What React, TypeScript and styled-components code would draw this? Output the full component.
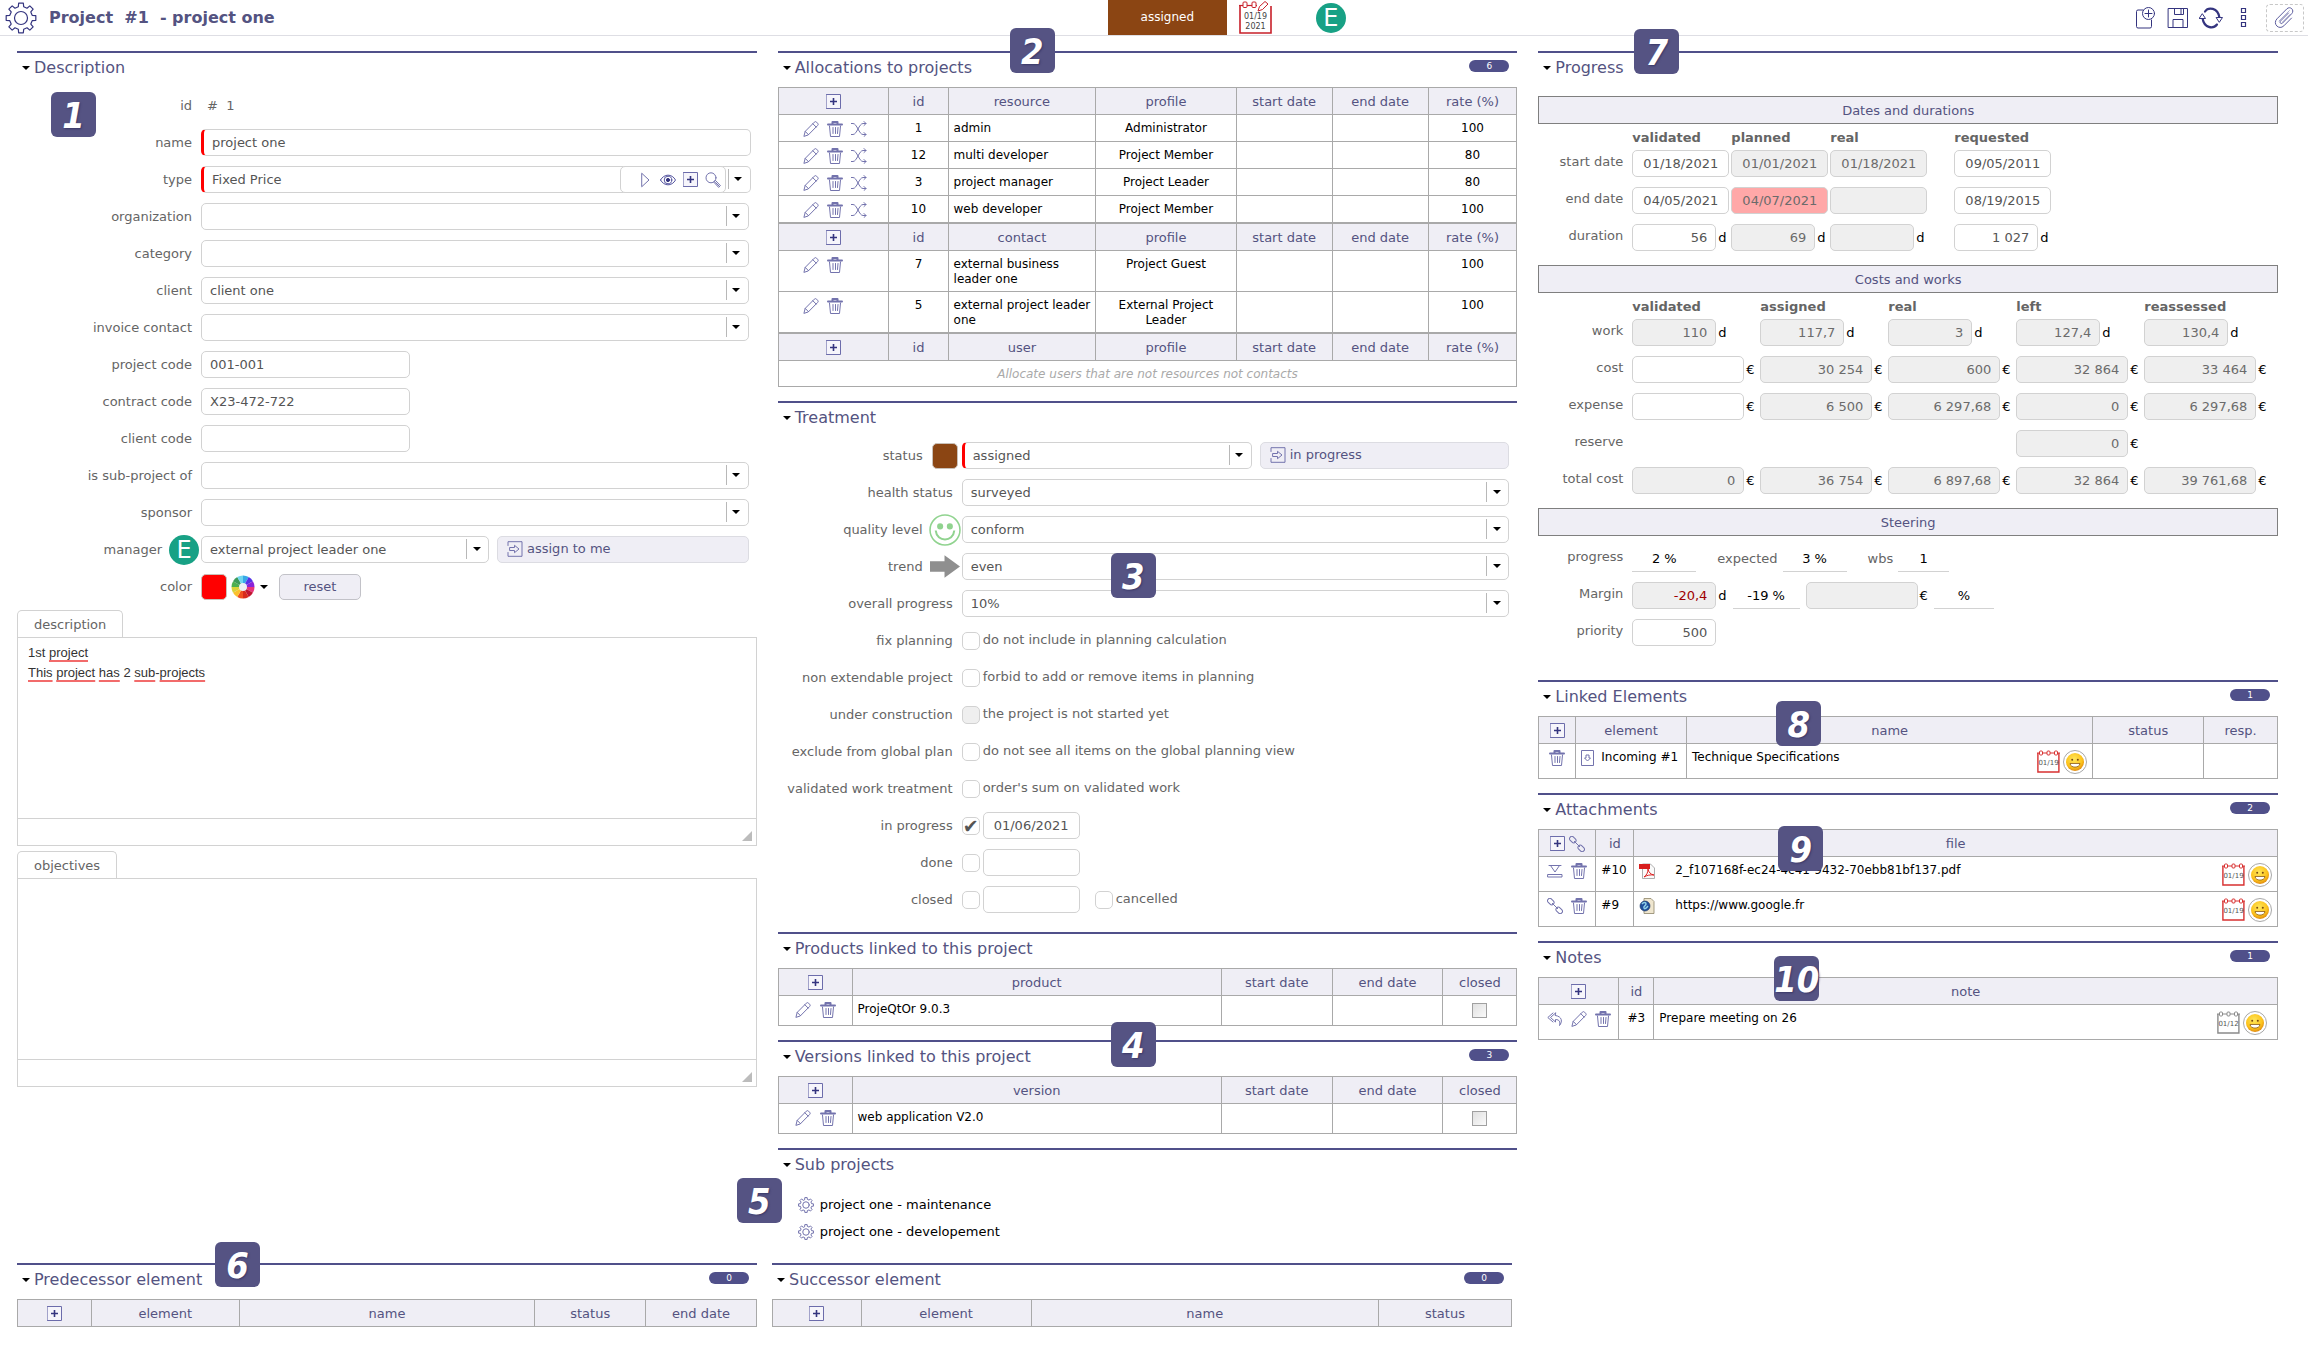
import React from "react";
import styled, { createGlobalStyle, css } from "styled-components";

const c = {
  brand: "#50508a",
  brandText: "#545381",
  icon: "#7373ad",
  iconDark: "#34347f",
  head: "#efeef5",
  grid: "#a9a9a9",
  field: "#d2d2d2",
  label: "#656565",
  value: "#555555",
  readonly: "#efefef",
};

const Global = createGlobalStyle`
  *, *::before, *::after { box-sizing: border-box; }
  body { margin: 0; background: #fff; font-family: "DejaVu Sans", Verdana, sans-serif; font-size: 13px; color: #000; }
  button, input, select, textarea { font: inherit; }
  a { color: inherit; text-decoration: none; }
`;

/* ---------- page ---------- */

const TopBar = styled.header`
  display: grid;
  grid-template-columns: 48% 1fr auto;
  align-items: center;
  height: 36px;
  border-bottom: 1px solid #dedee4;
`;
const TitleGroup = styled.div`
  display: flex;
  align-items: center;
  gap: 12px;
  padding-left: 5px;
`;
const Title = styled.h1`
  margin: 0;
  font-size: 16px;
  line-height: 20px;
  color: ${c.brandText};
  white-space: pre;
`;
const StatusGroup = styled.div`
  display: flex;
  align-items: center;
  height: 35px;
`;
const StatusTag = styled.div`
  width: 119px;
  height: 35px;
  margin-right: 12px;
  background: #8b4513;
  color: #fff;
  font-size: 12px;
  line-height: 35px;
  text-align: center;
`;
const Avatar = styled.span<{ $spaced?: boolean }>`
  flex: none;
  display: flex;
  align-items: center;
  justify-content: center;
  width: 30px;
  height: 30px;
  margin-left: ${(p) => (p.$spaced ? "44px" : "0")};
  border-radius: 50%;
  background: #18a185;
  color: #fff;
  font-size: 24px;
  line-height: 30px;
`;
const Tools = styled.div`
  display: flex;
  align-items: center;
  gap: 10px;
  padding-right: 4px;
`;
const IconButton = styled.button`
  flex: none;
  display: inline-flex;
  padding: 0;
  border: 0;
  background: none;
  cursor: pointer;
`;
const DropZone = styled.button`
  display: flex;
  align-items: center;
  justify-content: center;
  width: 38px;
  height: 28px;
  margin-left: 8px;
  padding: 0;
  border: 1px dashed #c8c8c8;
  border-radius: 4px;
  background: #fff;
`;
const Columns = styled.main`
  display: grid;
  grid-template-columns: repeat(3, minmax(0, 1fr));
  column-gap: 21px;
  align-items: start;
  padding: 15px 30px 0 17px;
`;
const Dependencies = styled.div`
  display: grid;
  grid-template-columns: repeat(3, minmax(0, 1fr));
  column-gap: 15px;
  padding: 18px 41px 20px 17px;
`;
const Column = styled.div`
  display: flex;
  flex-direction: column;
  gap: 14px;
`;

/* ---------- section ---------- */

const SectionBox = styled.section`
  position: relative;
  border-top: 2px solid ${c.brand};
`;
const SectionHead = styled.div`
  display: flex;
  align-items: center;
  height: 34px;
  padding: 0 8px 5px 5px;
`;
const Caret = styled.span`
  flex: none;
  border: 4px solid transparent;
  border-top-color: #000;
  border-bottom: 0;
`;
const SectionTitle = styled.h2`
  flex: 1;
  margin: 0 0 0 4px;
  font-size: 16px;
  font-weight: 400;
  line-height: 20px;
  color: ${c.brandText};
`;
const Count = styled.span`
  width: 40px;
  height: 12px;
  margin-bottom: 3px;
  border-radius: 6px;
  background: ${c.brand};
  color: #fff;
  font-size: 9px;
  line-height: 12px;
  text-align: center;
`;
const Marker = styled.span<{ $x: number; $y: number }>`
  position: absolute;
  z-index: 2;
  left: ${(p) => p.$x}px;
  top: ${(p) => p.$y}px;
  width: 45px;
  height: 45px;
  border-radius: 6px;
  background: #555383;
  color: #fff;
  font: italic bold 36px/47px "DejaVu Sans Condensed", "DejaVu Sans", sans-serif;
  text-align: center;
  white-space: nowrap;
  text-shadow: 1px 1px 2px #3a3868;
`;

function Section(p: {
  title: string;
  count?: number;
  mark?: [string, number, number];
  children: React.ReactNode;
}) {
  return (
    <SectionBox>
      <SectionHead>
        <Caret />
        <SectionTitle>{p.title}</SectionTitle>
        {p.count !== undefined && <Count>{p.count}</Count>}
      </SectionHead>
      {p.mark && (
        <Marker $x={p.mark[1]} $y={p.mark[2]}>
          {p.mark[0]}
        </Marker>
      )}
      {p.children}
    </SectionBox>
  );
}

/* ---------- form ---------- */

const Form = styled.div`
  display: flex;
  flex-direction: column;
  gap: 10px;
  padding: 5px 8px 5px 0;
`;
const Row = styled.div`
  display: grid;
  grid-template: 27px / 184px minmax(0, 1fr);
`;
const LabelCell = styled.div<{ $adorned?: boolean }>`
  display: flex;
  align-items: center;
  justify-content: flex-end;
  gap: 7px;
  min-height: 0;
  padding-right: ${(p) => (p.$adorned ? "2px" : "9px")};
`;
const Label = styled.label`
  color: ${c.label};
  line-height: 16px;
  white-space: nowrap;
`;
const Adornment = styled.span`
  flex: none;
  display: flex;
  align-items: center;
  justify-content: center;
  width: 30px;
  height: 27px;
`;
const Controls = styled.div`
  display: flex;
  align-items: center;
`;
const fieldBase = css`
  height: 27px;
  border: 1px solid ${c.field};
  border-radius: 5px;
  background: #fff;
  color: ${c.value};
  outline: none;
`;
const TextInput = styled.input<{ $w?: string; $required?: boolean }>`
  ${fieldBase}
  flex: none;
  width: ${(p) => p.$w ?? "100%"};
  padding: 0 8px;
  ${(p) => p.$required && "border-left: 3px solid #f00;"}
`;
const SelectBox = styled.span<{ $w?: string; $required?: boolean }>`
  ${fieldBase}
  position: relative;
  display: block;
  flex: none;
  width: ${(p) => p.$w ?? "100%"};
  ${(p) => p.$required && "border-left: 3px solid #f00;"}
`;
const NativeSelect = styled.select`
  appearance: none;
  display: block;
  width: 100%;
  height: 25px;
  padding: 0 24px 0 8px;
  border: 0;
  border-radius: 5px;
  background: none;
  color: ${c.value};
  outline: none;
`;
const Arrow = styled.span`
  position: absolute;
  top: 2px;
  right: 0;
  display: flex;
  align-items: center;
  justify-content: center;
  width: 22px;
  height: 20px;
  padding-right: 2px;
  border-left: 1px solid #b8b8b8;
  pointer-events: none;
`;
const FieldTools = styled.span`
  position: absolute;
  top: -1px;
  right: 24px;
  display: flex;
  align-items: center;
  justify-content: flex-end;
  gap: 7px;
  width: 106px;
  height: 27px;
  padding-right: 4px;
  border: 1px solid ${c.field};
  border-radius: 5px;
  background: #fff;
`;
const ActionButton = styled.button`
  display: flex;
  flex: 1;
  align-items: center;
  gap: 4px;
  height: 27px;
  margin-left: 8px;
  padding: 0 9px 2px;
  border: 1px solid #dcdce2;
  border-radius: 5px;
  background: ${c.head};
  color: ${c.brandText};
  text-align: left;
`;
const ResetButton = styled.button`
  width: 82px;
  height: 26px;
  margin-left: 11px;
  padding: 0;
  border: 1px solid #c2c2c8;
  border-radius: 5px;
  background: ${c.head};
  color: ${c.brandText};
`;
const Swatch = styled.span<{ $color: string }>`
  flex: none;
  width: 26px;
  height: 26px;
  border: 1px solid #c9c0b8;
  border-radius: 5px;
  background: ${(p) => p.$color};
`;
const ColorPicker = styled.button`
  display: flex;
  align-items: center;
  gap: 5px;
  margin-left: 4px;
  padding: 0;
  border: 0;
  background: none;
`;
const IdText = styled.output`
  padding-left: 6px;
  color: ${c.label};
  white-space: pre;
`;
const Check = styled.input`
  appearance: none;
  flex: none;
  display: flex;
  align-items: center;
  justify-content: center;
  width: 18px;
  height: 18px;
  margin: 0 3px 0 0;
  border: 1px solid ${c.field};
  border-radius: 5px;
  background: #fff;
  &:disabled { background: ${c.readonly}; }
  &:checked::before { content: "✔"; color: #555; font-size: 19px; line-height: 16px; }
`;
const CheckText = styled.label`
  padding-bottom: 2px;
  color: ${c.label};
  line-height: 16px;
`;
const DateInput = styled.input<{ $tone?: "ro" | "late" }>`
  ${fieldBase}
  width: 97px;
  padding: 0;
  text-align: center;
  background: ${(p) => (p.$tone === "ro" ? c.readonly : p.$tone === "late" ? "#ffa8a8" : "#fff")};
  ${(p) => p.$tone && "color: #6b6b6b;"}
`;
const Gap = styled.span`
  width: 15px;
`;

function Field(p: { label: string; id: string; icon?: React.ReactNode; children: React.ReactNode }) {
  return (
    <Row>
      <LabelCell $adorned={!!p.icon}>
        <Label htmlFor={p.id}>{p.label}</Label>
        {p.icon && <Adornment>{p.icon}</Adornment>}
      </LabelCell>
      <Controls>{p.children}</Controls>
    </Row>
  );
}
function Select(p: {
  id: string;
  value?: string;
  w?: string;
  required?: boolean;
  children?: React.ReactNode;
}) {
  return (
    <SelectBox $w={p.w} $required={p.required}>
      <NativeSelect id={p.id} defaultValue={p.value ?? ""}>
        <option>{p.value ?? ""}</option>
      </NativeSelect>
      {p.children}
      <Arrow>
        <Caret />
      </Arrow>
    </SelectBox>
  );
}
function CheckField(p: { label: string; id: string; text: string; disabled?: boolean }) {
  return (
    <Field label={p.label} id={p.id}>
      <Check type="checkbox" id={p.id} disabled={p.disabled} />
      <CheckText htmlFor={p.id}>{p.text}</CheckText>
    </Field>
  );
}

/* ---------- rich text editors ---------- */

const Editors = styled.div`
  display: flex;
  flex-direction: column;
  gap: 5px;
  padding-top: 5px;
`;
const Tab = styled.div`
  width: fit-content;
  height: 27px;
  padding: 0 16px;
  border: 1px solid ${c.field};
  border-bottom: 0;
  border-radius: 5px 5px 0 0;
  color: ${c.label};
  line-height: 28px;
`;
const EditorFrame = styled.div`
  border: 1px solid ${c.field};
`;
const editorArea = css`
  display: block;
  width: 100%;
  height: 180px;
  padding: 5px 10px;
  border: 0;
  outline: none;
  resize: none;
  color: #333;
  font: 13px/20px "Liberation Sans", Arial, sans-serif;
`;
const RichText = styled.div`
  ${editorArea}
`;
const PlainText = styled.textarea`
  ${editorArea}
`;
const Para = styled.div``;
const Misspelt = styled.span`
  text-decoration: underline 2px #f26b6b;
  text-underline-offset: 3px;
  text-decoration-skip-ink: none;
`;
const EditorFoot = styled.div`
  display: flex;
  align-items: flex-end;
  justify-content: flex-end;
  height: 27px;
  padding: 4px;
  border-top: 1px solid ${c.field};
`;
const Grip = styled.span`
  border-left: 10px solid transparent;
  border-bottom: 10px solid #bcbcbc;
`;

/* ---------- tables ---------- */

const Grid = styled.table`
  width: 100%;
  table-layout: fixed;
  border-collapse: collapse;
  font-size: 12px;
`;
const Th = styled.th`
  height: 27px;
  padding: 1px 0 0;
  border: 1px solid ${c.grid};
  background: ${c.head};
  color: ${c.brandText};
  font-size: 13px;
  font-weight: 400;
  line-height: 16px;
  vertical-align: middle;
`;
const Td = styled.td<{ $h?: number; $center?: boolean }>`
  height: ${(p) => p.$h ?? 27}px;
  padding: 6px 5px 4px;
  border: 1px solid ${c.grid};
  line-height: 15px;
  text-align: ${(p) => (p.$center ? "center" : "left")};
  vertical-align: top;
`;
const Hint = styled.td`
  height: 26px;
  padding: 0;
  border: 1px solid ${c.grid};
  color: #a9a9a9;
  font-style: italic;
  text-align: center;
`;
const Icons = styled.div<{ $pad?: number; $gap?: number }>`
  display: flex;
  align-items: center;
  justify-content: ${(p) => (p.$pad === undefined ? "center" : "flex-start")};
  gap: ${(p) => p.$gap ?? 8}px;
  height: 16px;
  padding-left: ${(p) => p.$pad ?? 0}px;
`;
const Line = styled.div<{ $gap?: number; $pad?: number }>`
  display: flex;
  align-items: flex-start;
  gap: ${(p) => p.$gap ?? 0}px;
  padding-right: ${(p) => p.$pad ?? 0}px;
`;
const Stamp = styled.span`
  flex: none;
  display: flex;
  gap: 3px;
  height: 24px;
  margin-left: auto;
`;
const SmallCheck = styled.input`
  appearance: none;
  width: 15px;
  height: 15px;
  margin: 0;
  border: 1px solid #a0a0a0;
  background: linear-gradient(135deg, #e0e0e0, #fafafa);
`;
const SubItem = styled.a`
  display: flex;
  align-items: center;
  gap: 6px;
  height: 27px;
  padding-left: 20px;
`;
const SubList = styled.nav`
  padding-top: 7px;
`;

/* ---------- progress ---------- */

const Bar = styled.h3`
  height: 28px;
  margin: 0;
  border: 1px solid #7f7f7f;
  background: ${c.head};
  color: ${c.brandText};
  font-size: 13px;
  font-weight: 400;
  line-height: 27px;
  text-align: center;
`;
const ProgressBody = styled.div`
  display: flex;
  flex-direction: column;
  gap: 14px;
  padding: 9px 0 20px;
`;
const Block = styled.div<{ $cols: string }>`
  display: grid;
  grid-template-columns: 94px ${(p) => p.$cols};
  row-gap: 10px;
`;
const HeadRow = styled.div<{ $cols: string }>`
  display: grid;
  grid-template-columns: 94px ${(p) => p.$cols};
  height: 26px;
  color: ${c.label};
  font-weight: 700;
  line-height: 28px;
`;
const SideLabel = styled.label`
  padding-right: 9px;
  color: ${c.label};
  line-height: 24px;
  text-align: right;
`;
const UnitBox = styled.span`
  display: flex;
  align-items: center;
  gap: 2px;
  height: 27px;
  line-height: 27px;
`;
const NumberInput = styled.input<{ $wide?: boolean; $ro?: boolean; $bad?: boolean }>`
  ${fieldBase}
  width: ${(p) => (p.$wide ? 112 : 84)}px;
  padding: 0 8px;
  text-align: right;
  ${(p) => p.$ro && `background: ${c.readonly}; color: #6b6b6b;`}
  ${(p) => p.$bad && "color: #a00000;"}
`;
const SteeringRows = styled.div`
  display: flex;
  flex-direction: column;
  gap: 10px;
  padding-top: 9px;
`;
const SteeringRow = styled.div`
  display: grid;
  grid-template-columns: 94px 1fr;
  height: 27px;
`;
const Inline = styled.div<{ $gap: number }>`
  display: flex;
  align-items: center;
  gap: ${(p) => p.$gap}px;
`;
const Value = styled.output<{ $w: number }>`
  width: ${(p) => p.$w}px;
  height: 27px;
  border-bottom: 1px solid ${c.field};
  line-height: 28px;
  text-align: center;
`;
const Pair = styled.span`
  display: flex;
  align-items: center;
  gap: 5px;
`;

/* ---------- icons ---------- */

type IP = { s?: number; color?: string; w?: number; children?: React.ReactNode; vb?: string };
const Svg = ({ s = 16, color = c.icon, w = 1, vb = "0 0 16 16", children }: IP) => (
  <svg width={s} height={s} viewBox={vb} fill="none" stroke={color} strokeWidth={w} strokeLinejoin="round" strokeLinecap="round" aria-hidden="true">
    {children}
  </svg>
);
const Plus = () => (
  <Svg s={15} vb="0 0 15 15" color="#6c6cab">
    <rect x=".5" y=".5" width="14" height="14" fill="#f6f5fb" />
    <path d="M4 7.5h7M7.5 4v7" stroke={c.iconDark} strokeWidth="1.600" strokeLinecap="butt" />
  </Svg>
);
const Pencil = () => (
  <Svg>
    <path d="M1 15l1.2-4.6L11.3 1.2a1.6 1.6 0 0 1 2.3 0l1 1a1.6 1.6 0 0 1 0 2.3L5.5 13.7z M2.2 10.4l3.3 3.3M9.8 2.7l3.4 3.4" />
  </Svg>
);
const Trash = () => (
  <Svg>
    <path d="M1 3.5h14M5.5 3V1h5v2" strokeWidth="2" />
    <path d="M2.5 5l1 10.5h9l1-10.500M6 6.500v6M8.500 6.500v6M11 6.500l-.5 6" />
  </Svg>
);
const Shuffle = () => (
  <Svg>
    <path d="M0 2.500h2c4 0 6 11 10 11h3M0 13.500h2c4 0 6-11 10-11h3M13 .500l2 2-2 2M13 11.500l2 2-2 2" />
  </Svg>
);
const Chain = () => (
  <Svg>
    <rect x="-3.600" y="-2.300" width="7.200" height="4.600" rx="2.300" transform="translate(3.800 3.600) rotate(45)" />
    <path d="M5.300 5.300l5.400 5.400" />
    <rect x="-3.600" y="-2.300" width="7.200" height="4.600" rx="2.300" transform="translate(12.200 12.400) rotate(45)" />
  </Svg>
);
const Download = () => (
  <Svg>
    <path d="M2 2.500h12M3.500 2.500L8 9l4.500-6.500M1 11.500h14v2.500H1z" />
  </Svg>
);
const Reply = () => (
  <Svg>
    <path d="M6 2L.8 6.500 6 11M8.500 2L3.500 6.500l5 4.500V8.500c4 0 5 2.500 4 6 3-3.500 3-9-4-10z" />
  </Svg>
);
const GoTo = () => (
  <Svg>
    <path d="M1 4.500V.7h14v14.600H1v-3.800M3 6.500h4.500V4.300L12 8l-4.500 3.700V9.500H3z" />
  </Svg>
);
const gearPath = (() => {
  const pts: string[] = [];
  const n = 8;
  for (let i = 0; i < n; i++) {
    [[-0.3, 11.5], [-0.2, 15], [0.2, 15], [0.3, 11.5]].forEach(([o, r]) => {
      const a = ((i + o) / n) * Math.PI * 2;
      pts.push(`${(16 + r * Math.sin(a)).toFixed(2)} ${(16 - r * Math.cos(a)).toFixed(2)}`);
    });
  }
  return `M${pts.join("L")}Z`;
})();
const Gear = ({ s, color, w }: IP) => (
  <Svg s={s} color={color} w={w} vb="0 0 32 32">
    <path d={gearPath} />
    <circle cx="16" cy="16" r="6.500" />
  </Svg>
);
const NewDoc = () => (
  <Svg s={22} vb="0 0 22 22" color={c.iconDark}>
    <path d="M8 3H3a1.500 1.500 0 0 0-1.500 1.500v15A1.500 1.500 0 0 0 3 21h12a1.500 1.500 0 0 0 1.500-1.500V13" />
    <circle cx="13.500" cy="6.500" r="6" />
    <path d="M10 6.500h7M13.500 3v7" />
  </Svg>
);
const Save = () => (
  <Svg s={22} vb="0 0 22 22" color={c.iconDark}>
    <path d="M1.500 1.500h19v19h-19zM7.500 1.500v6h9v-6M6 20.500v-8h10v8M14 1.500v6" />
  </Svg>
);
const Refresh = () => (
  <Svg s={24} vb="0 0 24 24" color={c.iconDark}>
    <path d="M6 5.500C9 1 19 1 20.500 12M18 18.500C14 23.500 5 22 3.500 12" strokeWidth="2.200" />
    <path d="M17.500 11.500h6l-3 4.500zM.5 12.500h6l-3-4.500z" fill="#fff" />
  </Svg>
);
const Kebab = () => (
  <svg width="15" height="22" viewBox="-7 0 15 22" fill="none" stroke={c.iconDark} aria-hidden="true">
    <path d="M1.500 1.500h4v4h-4zM1.500 8.500h4v4h-4zM1.500 15.500h4v4h-4z" strokeWidth="1.200" />
  </svg>
);
const Clip = () => (
  <Svg s={22} vb="0 0 22 22" color="#5d5d9e">
    <path d="M14.500 6L6.500 14c-1.400 1.500.6 3.500 2 2.100l9.200-9.400c3.300-3.500-1.500-8.200-4.900-4.800L3 11.800c-4.800 5 2 11.800 6.900 7l7.600-7.700" />
    <path d="M16 7.500L8.500 15M15.500 3.500L5 14" opacity=".5" />
  </Svg>
);
const Magnifier = () => (
  <Svg>
    <circle cx="6" cy="5.800" r="5" />
    <path d="M9 9.800l1.400-1.400 5 5.200-1.500 1.500zM10.500 10.500l3.500 3.500" />
  </Svg>
);
const Eye = () => (
  <Svg color="#5555a0">
    <path d="M.5 8C4 1.500 12 1.500 15.500 8 12 14.500 4 14.500.5 8z" />
    <circle cx="8" cy="8" r="3.800" />
    <circle cx="8" cy="8" r="1.600" fill={c.iconDark} stroke={c.iconDark} />
  </Svg>
);
const Play = () => (
  <Svg>
    <path d="M5 1.500l7 6.500-7 6.500z" />
  </Svg>
);
const GreenSmile = () => (
  <svg width="32" height="32" viewBox="0 0 31 31" fill="none" stroke="#90d38f" strokeWidth="1.500" style={{ flex: "none" }} aria-hidden="true">
    <circle cx="15.500" cy="15.500" r="14.500" />
    <circle cx="10.800" cy="12" r="2.200" fill="#90d38f" />
    <circle cx="20.200" cy="12" r="2.200" fill="#90d38f" />
    <path d="M6.500 16c1 11.500 17 11.500 18 0" strokeWidth="2" />
  </svg>
);
const Trend = () => (
  <svg width="31" height="23" viewBox="0 0 31 23" aria-hidden="true">
    <path d="M0 6h15V0l16 11.500L15 23v-6H0z" fill="#8f8f8f" />
  </svg>
);
const wheel = ["#38a9e8", "#5533e8", "#8a22d8", "#e8357a", "#c01530", "#d82a1c", "#f05020", "#fbc02d", "#d8d23a", "#4caf50", "#3c9a58", "#6fd6ee"];
const Wheel = () => (
  <svg width="24" height="24" viewBox="-12 -12 24 24" aria-hidden="true">
    {wheel.map((f, i) => {
      const p = (a: number) => `${(11.500 * Math.sin(a)).toFixed(2)} ${(-11.500 * Math.cos(a)).toFixed(2)}`;
      const a0 = (i / 12) * 2 * Math.PI;
      return <path key={f} d={`M0 0L${p(a0)}A11.500 11.500 0 0 1 ${p(a0 + Math.PI / 6)}Z`} fill={f} />;
    })}
    <circle r="4" fill="#eceff5" />
  </svg>
);
const Face = () => (
  <svg width="24" height="24" viewBox="0 0 24 24" aria-hidden="true">
    <defs>
      <radialGradient id="face" cx=".45" cy=".35" r=".65">
        <stop offset="0" stopColor="#ffe75a" />
        <stop offset=".7" stopColor="#fcc21b" />
        <stop offset="1" stopColor="#e08a10" />
      </radialGradient>
    </defs>
    <circle cx="12" cy="12" r="11.500" fill="#fff" stroke="#a8a8a8" />
    <circle cx="12" cy="12" r="9" fill="url(#face)" />
    <circle cx="9.200" cy="9.800" r="1" fill="#7a4a10" />
    <circle cx="14.800" cy="9.800" r="1" fill="#7a4a10" />
    <path d="M7 13.500h10c-.5 4.800-9.500 4.800-10 0z" fill="#fff" stroke="#8a5a18" strokeWidth=".8" />
  </svg>
);
const Calendar = ({ day, color = "#d83030" }: { day: string; color?: string }) => (
  <svg width="23" height="23" viewBox="0 0 23 23" fill="none" stroke={color} aria-label={day}>
    <path d="M.9 3v19h21V3" strokeWidth="1.400" />
    <path d="M0 3h23" strokeWidth="1" />
    <rect x="2.500" y="1" width="3" height="4" rx="1" fill="#fff" />
    <rect x="10" y="1" width="3" height="4" rx="1" fill="#fff" />
    <rect x="17.500" y="1" width="3" height="4" rx="1" fill="#fff" />
    <text x="11.500" y="15" fontSize="7" textAnchor="middle" fill="#555" stroke="none">{day}</text>
  </svg>
);
const BigCalendar = () => (
  <svg width="33" height="33" viewBox="0 0 33 33" fill="none" stroke="#c8202a" aria-hidden="true">
    <path d="M1 5v27h31V5" strokeWidth="1.600" />
    <path d="M0 4.500h18" strokeWidth="1.200" />
    <rect x="4" y="1" width="4" height="5.500" rx="1" fill="#fff" />
    <rect x="13" y="1" width="4" height="5.500" rx="1" fill="#fff" />
    <path d="M19 10l1.500-4.500L26 .5l3 2.500-5.500 5.500z" fill="#fff" />
    <text x="16.500" y="18" fontSize="8" textAnchor="middle" fill="#444" stroke="none">01/19</text>
    <text x="16.500" y="28" fontSize="8" textAnchor="middle" fill="#444" stroke="none">2021</text>
  </svg>
);
const Incoming = () => (
  <svg width="13" height="16" viewBox="0 0 13 16" fill="none" stroke={c.icon} aria-hidden="true">
    <path d="M.5 .5h12v15H.5zM5 5h3v3h1.500l-3 3-3-3H5z" />
  </svg>
);
const Pdf = () => (
  <svg width="16" height="16" viewBox="0 0 16 16" aria-hidden="true">
    <path d="M3.500 1h8l4 4v10.500h-12z" fill="#fafafa" stroke="#999" strokeWidth=".8" />
    <path d="M0 1h11v5H0z" fill="#d81e1e" />
    <path d="M5 14c3-2 4-5 4-8 .5 3 2.500 5.500 6 6-4-.5-7 .3-10 2z" fill="none" stroke="#d22" strokeWidth="1" />
  </svg>
);
const Web = () => (
  <svg width="16" height="16" viewBox="0 0 16 16" aria-hidden="true">
    <path d="M5 .5h7l3 3v12H5z" fill="#efe6cf" stroke="#8d8468" strokeWidth=".8" />
    <circle cx="6" cy="8" r="5" fill="#1e4f9c" stroke="#12315f" strokeWidth=".6" />
    <path d="M3 6c1.500-2 4-2 4 0S4 8 5 10s3-1 4-2" fill="none" stroke="#8fd0e8" strokeWidth="1.500" />
  </svg>
);

const Act = ({ name, children }: { name: string; children: React.ReactNode }) => (
  <IconButton type="button" aria-label={name}>
    {children}
  </IconButton>
);
const Add = () => (
  <Act name="add">
    <Plus />
  </Act>
);
const Edit = () => (
  <Act name="edit">
    <Pencil />
  </Act>
);
const Remove = () => (
  <Act name="delete">
    <Trash />
  </Act>
);

function Heads(p: { labels: string[]; widths: string[]; extra?: React.ReactNode }) {
  return (
    <>
      <colgroup>
        {p.widths.map((w, i) => (
          <col key={i} style={{ width: w }} />
        ))}
      </colgroup>
      <thead>
        <tr>
          <Th scope="col">
            <Icons $gap={4}>
              <Add />
              {p.extra}
            </Icons>
          </Th>
          {p.labels.map((l) => (
            <Th key={l} scope="col">
              {l}
            </Th>
          ))}
        </tr>
      </thead>
    </>
  );
}

/* ---------- data ---------- */

type Alloc = [string, string, string, string];
const resources: Alloc[] = [
  ["1", "admin", "Administrator", "100"],
  ["12", "multi developer", "Project Member", "80"],
  ["3", "project manager", "Project Leader", "80"],
  ["10", "web developer", "Project Member", "100"],
];
const contacts: Alloc[] = [
  ["7", "external business leader one", "Project Guest", "100"],
  ["5", "external project leader one", "External Project Leader", "100"],
];

function AllocTable(p: { who: string; rows: Alloc[]; h?: number; swap?: boolean; hint?: string }) {
  return (
    <Grid>
      <Heads
        widths={["15%", "8%", "20%", "19%", "13%", "13%", "12%"]}
        labels={["id", p.who, "profile", "start date", "end date", "rate (%)"]}
      />
      <tbody>
        {p.rows.map(([id, name, profile, rate]) => (
          <tr key={id}>
            <Td $h={p.h}>
              <Icons $pad={19}>
                <Edit />
                <Remove />
                {p.swap && (
                  <Act name="replace">
                    <Shuffle />
                  </Act>
                )}
              </Icons>
            </Td>
            <Td $center>{id}</Td>
            <Td>{name}</Td>
            <Td $center>{profile}</Td>
            <Td />
            <Td />
            <Td $center>{rate}</Td>
          </tr>
        ))}
        {p.hint && (
          <tr>
            <Hint colSpan={7}>{p.hint}</Hint>
          </tr>
        )}
      </tbody>
    </Grid>
  );
}

function LinkedTable(p: { kind: string; name: string }) {
  return (
    <Grid>
      <Heads widths={["10%", "50%", "15%", "15%", "10%"]} labels={[p.kind, "start date", "end date", "closed"]} />
      <tbody>
        <tr>
          <Td $h={30}>
            <Icons $gap={9}>
              <Edit />
              <Remove />
            </Icons>
          </Td>
          <Td>{p.name}</Td>
          <Td />
          <Td />
          <Td>
            <Icons>
              <SmallCheck type="checkbox" aria-label={`${p.kind} closed`} />
            </Icons>
          </Td>
        </tr>
      </tbody>
    </Grid>
  );
}

function Num(p: { id: string; label: string; v: string; unit?: string; wide?: boolean; ro?: boolean; bad?: boolean }) {
  return (
    <UnitBox>
      <NumberInput id={p.id} aria-label={p.label} defaultValue={p.v} $wide={p.wide} $ro={p.ro} $bad={p.bad} readOnly={p.ro} />
      {p.unit}
    </UnitBox>
  );
}

const dateCols = "99px 99px 124px 1fr";
const costCols = "repeat(5, 128px)";
const dateHeads = ["validated", "planned", "real", "requested"];
const costHeads = ["validated", "assigned", "real", "left", "reassessed"];
const dates: [string, [string, ("ro" | "late")?][]][] = [
  ["start date", [["01/18/2021"], ["01/01/2021", "ro"], ["01/18/2021", "ro"], ["09/05/2011"]]],
  ["end date", [["04/05/2021"], ["04/07/2021", "late"], ["", "ro"], ["08/19/2015"]]],
];
const durations: [string, boolean][] = [["56", false], ["69", true], ["", true], ["1 027", false]];
const costs: { name: string; unit: string; v: (string | null)[]; open?: boolean }[] = [
  { name: "work", unit: "d", v: ["110", "117,7", "3", "127,4", "130,4"] },
  { name: "cost", unit: "€", v: ["", "30 254", "600", "32 864", "33 464"], open: true },
  { name: "expense", unit: "€", v: ["", "6 500", "6 297,68", "0", "6 297,68"], open: true },
  { name: "reserve", unit: "€", v: [null, null, null, "0", null] },
  { name: "total cost", unit: "€", v: ["0", "36 754", "6 897,68", "32 864", "39 761,68"] },
];

const wider = "calc(100% + 2px)";

const DescriptionSection = () => (
  <Section title="Description" mark={["1", 34, 39]}>
    <Form>
      <Field label="id" id="pid">
        <IdText id="pid">#  1</IdText>
      </Field>
      <Field label="name" id="name">
        <TextInput id="name" defaultValue="project one" $w={wider} $required />
      </Field>
      <Field label="type" id="type">
        <Select id="type" value="Fixed Price" w={wider} required>
          <FieldTools>
            <Act name="go to"><Play /></Act>
            <Act name="view"><Eye /></Act>
            <Add />
            <Act name="search"><Magnifier /></Act>
          </FieldTools>
        </Select>
      </Field>
      <Field label="organization" id="org"><Select id="org" /></Field>
      <Field label="category" id="cat"><Select id="cat" /></Field>
      <Field label="client" id="client"><Select id="client" value="client one" /></Field>
      <Field label="invoice contact" id="inv"><Select id="inv" /></Field>
      <Field label="project code" id="pcode"><TextInput id="pcode" $w="209px" defaultValue="001-001" /></Field>
      <Field label="contract code" id="ccode"><TextInput id="ccode" $w="209px" defaultValue="X23-472-722" /></Field>
      <Field label="client code" id="clcode"><TextInput id="clcode" $w="209px" /></Field>
      <Field label="is sub-project of" id="parent"><Select id="parent" /></Field>
      <Field label="sponsor" id="sponsor"><Select id="sponsor" /></Field>
      <Field label="manager" id="manager" icon={<Avatar>E</Avatar>}>
        <Select id="manager" value="external project leader one" w="288px" />
        <ActionButton type="button"><GoTo />assign to me</ActionButton>
      </Field>
      <Field label="color" id="color">
        <Swatch $color="#ff0000" />
        <ColorPicker type="button" id="color" aria-label="choose color">
          <Wheel />
          <Caret />
        </ColorPicker>
        <ResetButton type="button">reset</ResetButton>
      </Field>
    </Form>
    <Editors>
      <div>
        <Tab id="tab-desc">description</Tab>
        <EditorFrame>
          <RichText contentEditable suppressContentEditableWarning role="textbox" aria-labelledby="tab-desc" spellCheck={false}>
            <Para>1st <Misspelt>project</Misspelt></Para>
            <Para>
              <Misspelt>This</Misspelt> <Misspelt>project</Misspelt> <Misspelt>has</Misspelt> 2 <Misspelt>sub</Misspelt>-<Misspelt>projects</Misspelt>
            </Para>
          </RichText>
          <EditorFoot><Grip /></EditorFoot>
        </EditorFrame>
      </div>
      <div>
        <Tab id="tab-obj">objectives</Tab>
        <EditorFrame>
          <PlainText aria-labelledby="tab-obj" />
          <EditorFoot><Grip /></EditorFoot>
        </EditorFrame>
      </div>
    </Editors>
  </Section>
);

const TreatmentSection = () => (
  <Section title="Treatment" mark={["3", 333, 150]}>
    <Form>
      <Field label="status" id="status" icon={<Swatch $color="#8b4513" />}>
        <Select id="status" value="assigned" w="290px" required />
        <ActionButton type="button"><GoTo />in progress</ActionButton>
      </Field>
      <Field label="health status" id="health"><Select id="health" value="surveyed" /></Field>
      <Field label="quality level" id="quality" icon={<GreenSmile />}><Select id="quality" value="conform" /></Field>
      <Field label="trend" id="trend" icon={<Trend />}><Select id="trend" value="even" /></Field>
      <Field label="overall progress" id="overall"><Select id="overall" value="10%" /></Field>
      <CheckField label="fix planning" id="fix" text="do not include in planning calculation" />
      <CheckField label="non extendable project" id="nonext" text="forbid to add or remove items in planning" />
      <CheckField label="under construction" id="under" text="the project is not started yet" disabled />
      <CheckField label="exclude from global plan" id="excl" text="do not see all items on the global planning view" />
      <CheckField label="validated work treatment" id="valid" text="order's sum on validated work" />
      <Field label="in progress" id="inprog">
        <Check type="checkbox" id="inprog" defaultChecked />
        <DateInput aria-label="in progress date" defaultValue="01/06/2021" />
      </Field>
      <Field label="done" id="done">
        <Check type="checkbox" id="done" />
        <DateInput aria-label="done date" />
      </Field>
      <Field label="closed" id="closed">
        <Check type="checkbox" id="closed" />
        <DateInput aria-label="closed date" />
        <Gap />
        <Check type="checkbox" id="cancelled" />
        <CheckText htmlFor="cancelled">cancelled</CheckText>
      </Field>
    </Form>
  </Section>
);

const ProgressSection = () => (
  <Section title="Progress" mark={["7", 96, -24]}>
    <ProgressBody>
      <div>
        <Bar>Dates and durations</Bar>
        <HeadRow $cols={dateCols}>
          <span />
          {dateHeads.map((h) => <span key={h}>{h}</span>)}
        </HeadRow>
        <Block $cols={dateCols}>
          {dates.map(([name, cells]) => (
            <React.Fragment key={name}>
              <SideLabel htmlFor={`${name}-0`}>{name}</SideLabel>
              {cells.map(([v, tone], i) => (
                <DateInput key={i} id={`${name}-${i}`} aria-label={`${name} ${dateHeads[i]}`} defaultValue={v} $tone={tone} readOnly={!!tone} />
              ))}
            </React.Fragment>
          ))}
          <SideLabel htmlFor="duration-0">duration</SideLabel>
          {durations.map(([v, ro], i) => (
            <Num key={i} id={`duration-${i}`} label={`duration ${dateHeads[i]}`} v={v} ro={ro} unit="d" />
          ))}
        </Block>
      </div>
      <div>
        <Bar>Costs and works</Bar>
        <HeadRow $cols={costCols}>
          <span />
          {costHeads.map((h) => <span key={h}>{h}</span>)}
        </HeadRow>
        <Block $cols={costCols}>
          {costs.map((r) => (
            <React.Fragment key={r.name}>
              <SideLabel htmlFor={`${r.name}-${r.v.findIndex((v) => v !== null)}`}>{r.name}</SideLabel>
              {r.v.map((v, i) =>
                v === null ? (
                  <span key={i} />
                ) : (
                  <Num key={i} id={`${r.name}-${i}`} label={`${r.name} ${costHeads[i]}`} v={v} unit={r.unit} wide={r.unit === "€"} ro={!(r.open && i === 0)} />
                )
              )}
            </React.Fragment>
          ))}
        </Block>
      </div>
      <div>
        <Bar>Steering</Bar>
        <SteeringRows>
          <SteeringRow>
            <SideLabel htmlFor="progress">progress</SideLabel>
            <Inline $gap={21}>
              <Value id="progress" $w={64}>2 %</Value>
              <Pair>
                <Label htmlFor="expected">expected</Label>
                <Value id="expected" $w={64}>3 %</Value>
              </Pair>
              <Pair>
                <Label htmlFor="wbs">wbs</Label>
                <Value id="wbs" $w={51}>1</Value>
              </Pair>
            </Inline>
          </SteeringRow>
          <SteeringRow>
            <SideLabel htmlFor="margin">Margin</SideLabel>
            <Inline $gap={6}>
              <Num id="margin" label="Margin in days" v="-20,4" unit="d" ro bad />
              <Value $w={67}>-19 %</Value>
              <Num id="margin-cost" label="Margin in cost" v="" unit="€" ro wide />
              <Value $w={60}>%</Value>
            </Inline>
          </SteeringRow>
          <SteeringRow>
            <SideLabel htmlFor="priority">priority</SideLabel>
            <Num id="priority" label="priority" v="500" />
          </SteeringRow>
        </SteeringRows>
      </div>
    </ProgressBody>
  </Section>
);

const ReferenceSections = () => (
  <>
    <Section title="Linked Elements" count={1} mark={["8", 238, 19]}>
      <Grid>
        <Heads widths={["5%", "15%", "55%", "15%", "10%"]} labels={["element", "name", "status", "resp."]} />
        <tbody>
          <tr>
            <Td $h={35}><Icons><Remove /></Icons></Td>
            <Td $center><Line $gap={7}><Incoming />Incoming #1</Line></Td>
            <Td>
              <Line>
                <a href="#specifications">Technique Specifications</a>
                <Stamp><Calendar day="01/19" /><Face /></Stamp>
              </Line>
            </Td>
            <Td />
            <Td />
          </tr>
        </tbody>
      </Grid>
    </Section>
    <Section title="Attachments" count={2} mark={["9", 240, 31]}>
      <Grid>
        <Heads
          widths={["57px", "38px", "auto"]}
          labels={["id", "file"]}
          extra={<Act name="add link"><Chain /></Act>}
        />
        <tbody>
          <tr>
            <Td $h={35}><Icons><Act name="download"><Download /></Act><Remove /></Icons></Td>
            <Td>#10</Td>
            <Td>
              <Line $gap={20}>
                <Pdf />
                <a href="#pdf">2_f107168f-ec24-4c41-9432-70ebb81bf137.pdf</a>
                <Stamp><Calendar day="01/19" /><Face /></Stamp>
              </Line>
            </Td>
          </tr>
          <tr>
            <Td $h={35}><Icons><Act name="open link"><Chain /></Act><Remove /></Icons></Td>
            <Td>#9</Td>
            <Td>
              <Line $gap={20}>
                <Web />
                <a href="#google">https://www.google.fr</a>
                <Stamp><Calendar day="01/19" /><Face /></Stamp>
              </Line>
            </Td>
          </tr>
        </tbody>
      </Grid>
    </Section>
    <Section title="Notes" count={1} mark={["10", 236, 13]}>
      <Grid>
        <Heads widths={["80px", "35px", "auto"]} labels={["id", "note"]} />
        <tbody>
          <tr>
            <Td $h={35}><Icons><Act name="reply"><Reply /></Act><Edit /><Remove /></Icons></Td>
            <Td $center>#3</Td>
            <Td>
              <Line $pad={5}>
                Prepare meeting on 26
                <Stamp><Calendar day="01/12" color="#8a8a8a" /><Face /></Stamp>
              </Line>
            </Td>
          </tr>
        </tbody>
      </Grid>
    </Section>
  </>
);

export default function App() {
  return (
    <>
      <Global />
      <TopBar>
        <TitleGroup>
          <Gear s={32} color={c.iconDark} w={1.2} />
          <Title>{"Project  #1  - project one"}</Title>
        </TitleGroup>
        <StatusGroup>
          <StatusTag>assigned</StatusTag>
          <BigCalendar />
          <Avatar $spaced>E</Avatar>
        </StatusGroup>
        <Tools>
          <Act name="new"><NewDoc /></Act>
          <Act name="save"><Save /></Act>
          <Act name="refresh"><Refresh /></Act>
          <Act name="more"><Kebab /></Act>
          <DropZone type="button" aria-label="attach a file"><Clip /></DropZone>
        </Tools>
      </TopBar>
      <Columns>
        <Column>
          <DescriptionSection />
        </Column>
        <Column>
          <Section title="Allocations to projects" count={6} mark={["2", 232, -25]}>
            <AllocTable who="resource" rows={resources} swap />
            <AllocTable who="contact" rows={contacts} h={41} />
            <AllocTable who="user" rows={[]} hint="Allocate users that are not resources not contacts" />
          </Section>
          <TreatmentSection />
          <Section title="Products linked to this project">
            <LinkedTable kind="product" name="ProjeQtOr 9.0.3" />
          </Section>
          <Section title="Versions linked to this project" count={3} mark={["4", 333, -20]}>
            <LinkedTable kind="version" name="web application V2.0" />
          </Section>
          <Section title="Sub projects" mark={["5", -41, 28]}>
            <SubList>
              <SubItem href="#maintenance"><Gear s={16} color={c.icon} w={2} />project one - maintenance</SubItem>
              <SubItem href="#developement"><Gear s={16} color={c.icon} w={2} />project one - developement</SubItem>
            </SubList>
          </Section>
        </Column>
        <Column>
          <ProgressSection />
          <ReferenceSections />
        </Column>
      </Columns>
      <Dependencies>
        <Section title="Predecessor element" count={0} mark={["6", 198, -23]}>
          <Grid>
            <Heads widths={["10%", "20%", "40%", "15%", "15%"]} labels={["element", "name", "status", "end date"]} />
          </Grid>
        </Section>
        <Section title="Successor element" count={0}>
          <Grid>
            <Heads widths={["12%", "23%", "47%", "18%"]} labels={["element", "name", "status"]} />
          </Grid>
        </Section>
      </Dependencies>
    </>
  );
}
